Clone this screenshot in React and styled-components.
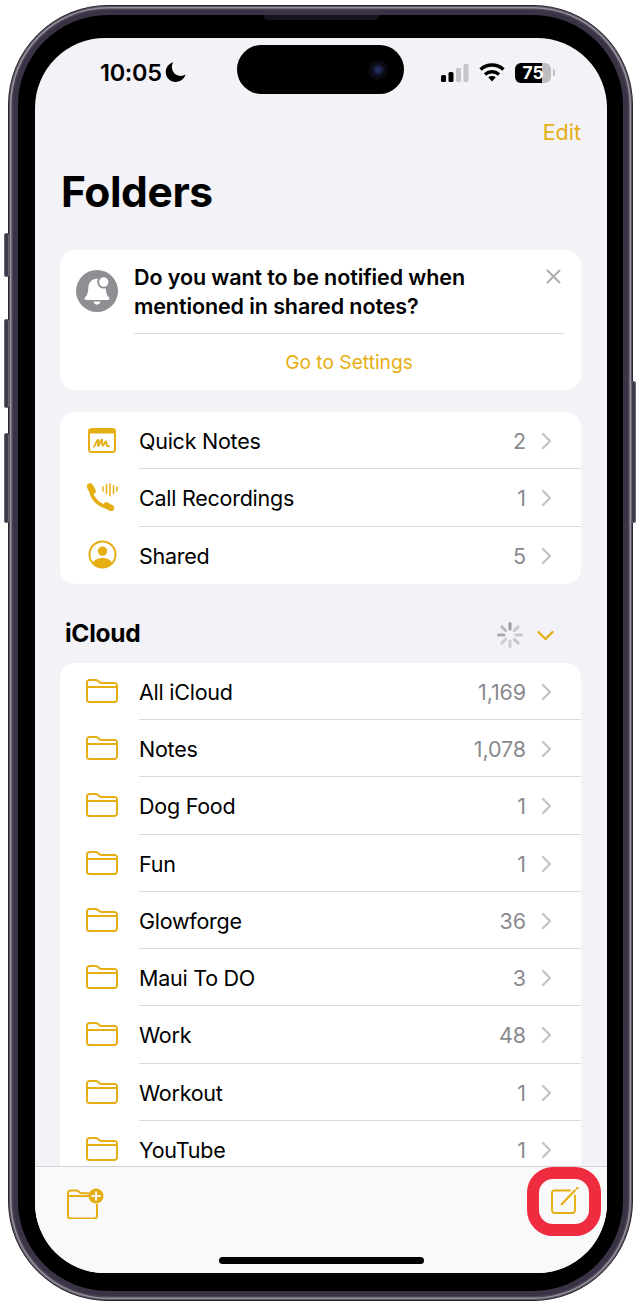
import React from "react";
import styled, { createGlobalStyle } from "styled-components";

const GOLD = "#e5ae12";

const GlobalStyle = createGlobalStyle`
  html, body {
    margin: 0;
    padding: 0;
    background: #fff;
    font-family: Inter, "Noto Sans", sans-serif;
  }
  * { box-sizing: border-box; }
`;

const Page = styled.div`
  width: 642px;
  height: 1305px;
  padding: 5px 9px 4px 8px;
  overflow: hidden;
`;

const Phone = styled.div`
  position: relative;
  width: 625px;
  height: 1296px;
  padding: 9px;
  border-radius: 100px;
  background: #3a3345;
  border: 1px solid #2a2530;
  box-shadow: inset 0 0 0 1px #5a5462, inset 0 0 0 2.5px #96919b, inset 0 0 0 4px #4a4454;
`;

const SideButton = styled.div`
  position: absolute;
  width: 5px;
  top: ${(p) => p.$top}px;
  height: ${(p) => p.$height}px;
  ${(p) => (p.$right ? "right: -4px;" : "left: -5px;")}
  background: #3f384a;
  border: 1px solid #6b6572;
  border-radius: 2px;
`;

const Speaker = styled.div`
  position: absolute;
  top: 9px;
  left: 255px;
  width: 115px;
  height: 5px;
  background: #17151b;
  border-radius: 0 0 4px 4px;
`;

const Bezel = styled.div`
  width: 100%;
  height: 100%;
  padding: 23px 16px 18px 17px;
  background: #000;
  border-radius: 90px;
`;

const Screen = styled.div`
  position: relative;
  width: 572px;
  height: 100%;
  display: flex;
  flex-direction: column;
  overflow: hidden;
  background: #f2f2f7;
  border-radius: 70px;
`;

const StatusBar = styled.div`
  display: grid;
  grid-template-columns: 202px 167px 203px;
  height: 57px;
  padding-top: 7px;
  flex-shrink: 0;
`;

const StatusLeft = styled.div`
  display: flex;
  align-items: center;
  padding: 4px 0 0 65px;
  gap: 3px;
  font-size: 23.5px;
  font-weight: 600;
  color: #000;
  letter-spacing: -0.3px;
`;

const Island = styled.div`
  display: flex;
  align-items: center;
  justify-content: flex-end;
  padding-right: 20px;
  height: 49px;
  background: #000;
  border-radius: 25px;
`;

const Lens = styled.div`
  width: 12px;
  height: 12px;
  border-radius: 50%;
  background: radial-gradient(circle, #2a3568 0%, #14183a 55%, #08080f 100%);
  box-shadow: 0 0 0 4px #0a0a10;
`;

const StatusRight = styled.div`
  display: flex;
  align-items: center;
  gap: 10px;
  padding: 5px 0 0 37px;
`;

const Battery = styled.div`
  display: flex;
  align-items: center;
  gap: 2px;
`;

const BatteryBody = styled.div`
  width: 36px;
  height: 20px;
  border-radius: 6px;
  background: linear-gradient(90deg, #000 0 75%, #bdbdc0 75% 100%);
  color: #fff;
  font-size: 17.5px;
  font-weight: 700;
  line-height: 20px;
  text-align: center;
`;

const BatteryNub = styled.div`
  width: 2px;
  height: 7px;
  background: #bdbdc0;
  border-radius: 0 2px 2px 0;
`;

const Scroll = styled.div`
  flex: 1;
  min-height: 0;
  overflow: hidden;
  padding: 0 26px 0 25px;
`;

const NavBar = styled.div`
  display: flex;
  justify-content: flex-end;
  height: 26px;
  margin-top: 24px;
`;

const EditLink = styled.span`
  color: ${GOLD};
  font-size: 21.5px;
  line-height: 26px;
`;

const Title = styled.h1`
  margin: 22px 0 0 1px;
  font-size: 42.5px;
  line-height: 50px;
  font-weight: 700;
  color: #000;
  letter-spacing: -0.4px;
`;

const Card = styled.div`
  background: #fff;
  border-radius: 15px;
  margin-top: ${(p) => p.$top || 0}px;
`;

const Notice = styled(Card)`
  position: relative;
  height: 140px;
  display: grid;
  grid-template-columns: 42px 1fr;
  column-gap: 16px;
  padding: 13px 17px 0 16px;
`;

const BellCircle = styled.div`
  width: 42px;
  height: 42px;
  margin-top: 7px;
  display: flex;
  align-items: center;
  justify-content: center;
  border-radius: 50%;
  background: #8e8e93;
`;

const NoticeBody = styled.div`
  min-width: 0;
`;

const NoticeText = styled.div`
  font-size: 21.5px;
  line-height: 28.5px;
  font-weight: 600;
  color: #000;
  padding-bottom: 13px;
  border-bottom: 1px solid #dcdcdf;
  letter-spacing: -0.1px;
  white-space: nowrap;
`;

const SettingsLink = styled.div`
  color: ${GOLD};
  font-size: 19.2px;
  line-height: 26px;
  margin-top: 15px;
  text-align: center;
`;

const CloseButton = styled.div`
  position: absolute;
  top: 19px;
  right: 20px;
  width: 15px;
  height: 15px;
  display: flex;
`;

const Row = styled.div`
  display: grid;
  grid-template-columns: 79px 1fr;
  align-items: center;
  height: 57.25px;
`;

const RowIcon = styled.div`
  display: flex;
  justify-content: center;
  padding: 0 0 1px 5px;
`;

const RowMain = styled.div`
  display: grid;
  grid-template-columns: 1fr auto 55px;
  align-items: center;
  align-self: stretch;
  padding-top: 2px;
  border-bottom: ${(p) => (p.$last ? "none" : "1px solid #dcdcdf")};
`;

const RowLabel = styled.span`
  font-size: 21.5px;
  color: #000;
  letter-spacing: -0.25px;
`;

const RowCount = styled.span`
  font-size: 21.5px;
  color: #8a8a8e;
  letter-spacing: -0.1px;
`;

const RowChevron = styled.div`
  display: flex;
  padding-left: 15px;
`;

const SectionHeader = styled.div`
  display: flex;
  align-items: center;
  height: 79px;
  padding: 20px 27px 0 5px;
`;

const SectionTitle = styled.h2`
  flex: 1;
  margin: 0;
  font-size: 24.5px;
  font-weight: 700;
  color: #000;
  letter-spacing: -0.3px;
`;

const SectionTools = styled.div`
  display: flex;
  align-items: center;
  gap: 14px;
  padding-top: 4px;
`;

const Toolbar = styled.div`
  flex-shrink: 0;
  height: 107px;
  display: flex;
  justify-content: space-between;
  align-items: flex-start;
  padding: 20px 28px 0 31px;
  background: #f9f9f9;
  border-top: 1px solid #d3d3d6;
`;

const HomeBar = styled.div`
  position: absolute;
  bottom: 9px;
  left: 184px;
  width: 205px;
  height: 7px;
  background: #000;
  border-radius: 4px;
`;

const Highlight = styled.div`
  position: absolute;
  right: 6px;
  bottom: 37px;
  width: 74px;
  height: 69px;
  border: 12px solid #ef2b40;
  border-radius: 26px;
`;

const Moon = () => (
  <svg width="22" height="22" viewBox="0 0 22 22">
    <path
      d="M8.200 1.200C7.300 2.600 6.900 4.200 6.900 5.900c0 5 4 9 9 9 1.700 0 3.300-.5 4.700-1.300C19.300 17.900 15.300 21 10.700 21 5 21 .7 16.500.7 11 .7 6.400 3.900 2.400 8.200 1.200z"
      fill="#000"
    />
  </svg>
);

const Signal = () => (
  <svg width="28" height="18" viewBox="0 0 28 18">
    <rect x="0" y="11" width="5" height="7" rx="1.500" fill="#000" />
    <rect x="7.500" y="8" width="5" height="10" rx="1.500" fill="#000" />
    <rect x="15" y="4" width="5" height="14" rx="1.500" fill="#c6c6c8" />
    <rect x="22.500" y="0" width="5" height="18" rx="1.500" fill="#c6c6c8" />
  </svg>
);

const Wifi = () => (
  <svg width="26" height="19" viewBox="0 0 26 19" fill="none" stroke="#000" strokeWidth="3.400">
    <path d="M1.500 6.500C8 .500 18 .500 24.500 6.500" />
    <path d="M6 11.500c4-3.600 10-3.600 14 0" />
    <path d="M13 18.500l-3.800-4.300c2.200-1.700 5.400-1.700 7.600 0z" fill="#000" stroke="none" />
  </svg>
);

const Bell = () => (
  <svg width="38" height="38" viewBox="0 0 34 34">
    <path
      d="M17 6c-4.800 0-7.600 3.500-7.800 8.300-.2 4-.7 6.300-3 8.600-.8.800-.3 2.100.9 2.100h19.800c1.200 0 1.700-1.300.9-2.100-2.300-2.300-2.800-4.600-3-8.600C24.600 9.500 21.800 6 17 6z"
      fill="#fff"
    />
    <path d="M13.800 26.500h6.400c-.4 1.700-1.700 2.700-3.200 2.700s-2.800-1-3.200-2.700z" fill="#fff" />
    <circle cx="23" cy="9" r="5.800" fill="#8e8e93" />
    <circle cx="23" cy="9" r="4.200" fill="#fff" />
  </svg>
);

const Close = () => (
  <svg width="15" height="15" viewBox="0 0 15 15" stroke="#aeaeb2" strokeWidth="2" strokeLinecap="round">
    <path d="M1.500 1.500l12 12M13.500 1.500l-12 12" />
  </svg>
);

const QuickNotesIcon = () => (
  <svg width="28" height="25" viewBox="0 0 28 25" fill="none">
    <rect x="1" y="1" width="26" height="23" rx="2.500" stroke={GOLD} strokeWidth="2" />
    <path d="M1 3.500A2.500 2.500 0 0 1 3.500 1h21A2.500 2.500 0 0 1 27 3.500V5.500H1z" fill={GOLD} />
    <path
      d="M6 18.500c1.500-2 2.800-6.500 4-6.500s-.8 6 .3 6 2.400-6.500 3.500-6.500-.2 6.200 1.200 6.200 1.800-4.500 2.800-4.500.4 4.800 1.700 4.800h1.500"
      stroke={GOLD}
      strokeWidth="1.800"
      strokeLinecap="round"
      strokeLinejoin="round"
    />
  </svg>
);

const CallIcon = () => (
  <svg width="31" height="28" viewBox="0 0 31 28" fill="none" strokeLinecap="round">
    <path d="M3.700 5C3.700 11 6.500 15.500 9.500 18.500S17 24 23 24" stroke={GOLD} strokeWidth="3.600" />
    <path d="M3 3.500L5.500 8M19.500 22.500L24 25" stroke={GOLD} strokeWidth="6.500" />
    <path d="M16 4v4M19.500 1.500v9M23 0.700v12M26.500 2.500v8M30 4v4" stroke={GOLD} strokeWidth="1.500" />
  </svg>
);

const SharedIcon = () => (
  <svg width="29" height="29" viewBox="0 0 30 30" fill="none">
    <circle cx="15" cy="15" r="13.500" stroke={GOLD} strokeWidth="2" />
    <circle cx="15" cy="11.500" r="4.800" fill={GOLD} />
    <path d="M5 23.500c1.500-3.500 5.500-5 10-5s8.500 1.500 10 5c-2.500 3-6 5-10 5s-7.500-2-10-5z" fill={GOLD} />
  </svg>
);

const FolderIcon = () => (
  <svg width="32" height="24" viewBox="0 0 32 24" fill="none" stroke={GOLD} strokeWidth="2" strokeLinejoin="round">
    <path d="M1 7V3.500A2.500 2.500 0 0 1 3.500 1h6.300c.9 0 1.500.3 2.200.9l1.500 1.300c.6.500 1.200.7 2 .7h13A2.500 2.500 0 0 1 31 6.400V20.500a2.500 2.500 0 0 1-2.500 2.500h-25A2.500 2.500 0 0 1 1 20.500z" />
    <path d="M1 8h30" />
  </svg>
);

const NewFolderIcon = () => (
  <svg width="38" height="32" viewBox="0 0 38 32" fill="none">
    <path
      d="M23 9H2V6A2.500 2.500 0 0 1 4.500 3.500h6c.9 0 1.500.3 2.200.9l1.300 1.200c.6.500 1.200.7 2 .7H23M2 9v20A2.500 2.500 0 0 0 4.500 31.500h24a2.500 2.500 0 0 0 2.500-2.500V17"
      stroke={GOLD}
      strokeWidth="2"
      strokeLinejoin="round"
    />
    <circle cx="30" cy="9" r="7.500" fill={GOLD} />
    <path d="M30 5.200v7.600M26.200 9h7.600" stroke="#f9f9f9" strokeWidth="2" strokeLinecap="round" />
  </svg>
);

const ComposeIcon = () => (
  <svg width="28" height="28" viewBox="0 0 28 28" fill="none" stroke={GOLD} strokeWidth="1.900" strokeLinecap="round">
    <path d="M19 3.500H3.500A2.500 2.500 0 0 0 1 6v17.500A2.500 2.500 0 0 0 3.500 26h18a2.500 2.500 0 0 0 2.500-2.500V8.500" />
    <path d="M10.700 17.300L23.800 3.400" strokeWidth="2.200" />
    <path d="M26 1.500l.4-.4" strokeWidth="2.200" />
  </svg>
);

const Chevron = () => (
  <svg width="11" height="18" viewBox="0 0 11 18" fill="none" stroke="#c4c4c7" strokeWidth="2.300" strokeLinecap="round" strokeLinejoin="round">
    <path d="M2 2l7 7-7 7" />
  </svg>
);

const Spinner = () => (
  <svg width="26" height="26" viewBox="0 0 26 26" strokeWidth="3" strokeLinecap="round">
    {[0.95, 0.45, 0.45, 0.5, 0.4, 0.4, 0.8, 0.6].map((opacity, i) => (
      <line
        key={i}
        x1="13"
        y1="1.500"
        x2="13"
        y2="7"
        stroke="#98989c"
        opacity={opacity}
        transform={`rotate(${i * 45} 13 13)`}
      />
    ))}
  </svg>
);

const CollapseChevron = () => (
  <svg width="17" height="11" viewBox="0 0 17 11" fill="none" stroke={GOLD} strokeWidth="2.300" strokeLinecap="round" strokeLinejoin="round">
    <path d="M1.500 2l7 7 7-7" />
  </svg>
);

const smartFolders = [
  { label: "Quick Notes", count: "2", icon: <QuickNotesIcon /> },
  { label: "Call Recordings", count: "1", icon: <CallIcon /> },
  { label: "Shared", count: "5", icon: <SharedIcon /> },
];

const iCloudFolders = [
  { label: "All iCloud", count: "1,169" },
  { label: "Notes", count: "1,078" },
  { label: "Dog Food", count: "1" },
  { label: "Fun", count: "1" },
  { label: "Glowforge", count: "36" },
  { label: "Maui To DO", count: "3" },
  { label: "Work", count: "48" },
  { label: "Workout", count: "1" },
  { label: "YouTube", count: "1" },
];

const FolderRow = ({ label, count, icon, last }) => (
  <Row>
    <RowIcon>{icon}</RowIcon>
    <RowMain $last={last}>
      <RowLabel>{label}</RowLabel>
      <RowCount>{count}</RowCount>
      <RowChevron>
        <Chevron />
      </RowChevron>
    </RowMain>
  </Row>
);

export default function App() {
  return (
    <Page>
      <GlobalStyle />
      <Phone>
        <SideButton $top={227} $height={44} />
        <SideButton $top={313} $height={89} />
        <SideButton $top={427} $height={90} />
        <SideButton $right $top={375} $height={142} />
        <Speaker />
        <Bezel>
          <Screen>
            <StatusBar>
              <StatusLeft>
                10:05 <Moon />
              </StatusLeft>
              <Island>
                <Lens />
              </Island>
              <StatusRight>
                <Signal />
                <Wifi />
                <Battery>
                  <BatteryBody>75</BatteryBody>
                  <BatteryNub />
                </Battery>
              </StatusRight>
            </StatusBar>
            <Scroll>
              <NavBar>
                <EditLink>Edit</EditLink>
              </NavBar>
              <Title>Folders</Title>
              <Notice $top={33}>
                <BellCircle>
                  <Bell />
                </BellCircle>
                <NoticeBody>
                  <NoticeText>
                    Do you want to be notified when
                    <br />
                    mentioned in shared notes?
                  </NoticeText>
                  <SettingsLink>Go to Settings</SettingsLink>
                </NoticeBody>
                <CloseButton>
                  <Close />
                </CloseButton>
              </Notice>
              <Card $top={22}>
                {smartFolders.map((f, i) => (
                  <FolderRow key={f.label} {...f} last={i === smartFolders.length - 1} />
                ))}
              </Card>
              <SectionHeader>
                <SectionTitle>iCloud</SectionTitle>
                <SectionTools>
                  <Spinner />
                  <CollapseChevron />
                </SectionTools>
              </SectionHeader>
              <Card>
                {iCloudFolders.map((f, i) => (
                  <FolderRow key={f.label} {...f} icon={<FolderIcon />} last={i === iCloudFolders.length - 1} />
                ))}
              </Card>
            </Scroll>
            <Toolbar>
              <NewFolderIcon />
              <ComposeIcon />
            </Toolbar>
            <HomeBar />
            <Highlight />
          </Screen>
        </Bezel>
      </Phone>
    </Page>
  );
}
